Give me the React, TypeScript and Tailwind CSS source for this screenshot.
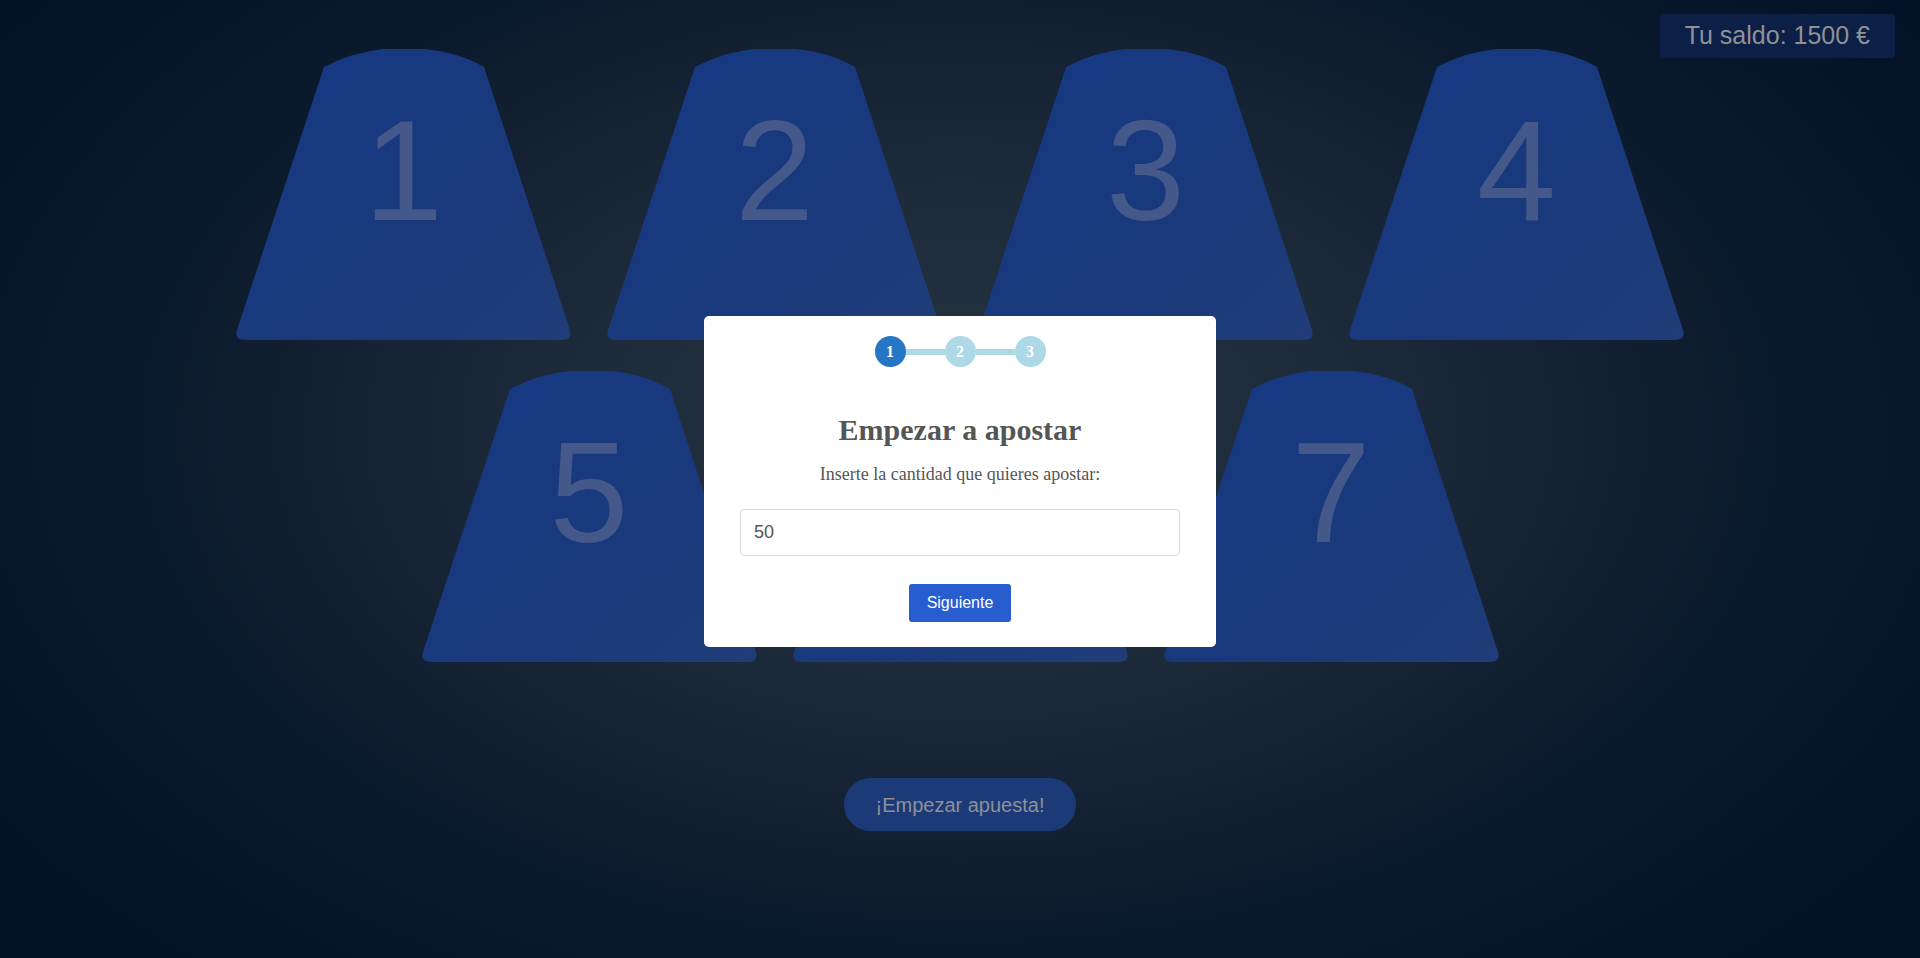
import React from "react";

function Cup({ n }: { n: number }) {
  return (
    <div className="relative w-[335px] h-[292px] flex justify-center">
      <svg
        className="absolute inset-0"
        width="335"
        height="292"
        viewBox="0 0 335 292"
        aria-hidden="true"
      >
        <defs>
          <linearGradient id={`cupg${n}`} x1="0" y1="0" x2="1" y2="1">
            <stop offset="0%" stopColor="#163984" />
            <stop offset="60%" stopColor="#1a397c" />
            <stop offset="100%" stopColor="#203d78" />
          </linearGradient>
        </defs>
        <path
          d="M1 281 L88 18 Q116 3 148 0 L188 0 Q222 3 248 18 L334 281 Q337 291 326 291 L9 291 Q-2 291 1 281 Z"
          fill={`url(#cupg${n})`}
        />
      </svg>
      <span className="relative pt-[51px] text-[142px] leading-[142px] text-[#44598a] font-['Liberation_Sans',Arial,sans-serif]">
        {n}
      </span>
    </div>
  );
}

export default function App() {
  return (
    <div className="relative min-h-[958px] w-full overflow-hidden bg-[radial-gradient(ellipse_60%_75%_at_50%_45%,#263443_0%,#1c2a3a_35%,#0c1a2d_70%,#031227_100%)] font-['Liberation_Sans',Arial,sans-serif]">
      <div className="absolute top-[14px] right-[25px] h-[44px] px-[25px] flex items-center rounded-[4px] bg-[#0c1f47] text-[25px] text-[#8f9196]">
        Tu saldo: 1500 €
      </div>

      <div className="flex flex-col items-center pt-[49px]">
        <div className="flex gap-[36px]">
          <Cup n={1} />
          <Cup n={2} />
          <Cup n={3} />
          <Cup n={4} />
        </div>
        <div className="flex gap-[36px] mt-[30px]">
          <Cup n={5} />
          <Cup n={6} />
          <Cup n={7} />
        </div>
        <button className="mt-[115px] w-[232px] h-[53px] rounded-full bg-[#1d3a78] text-[20px] text-[#8c909a]">
          ¡Empezar apuesta!
        </button>
      </div>

      <div className="fixed inset-0 flex justify-center items-start pt-[316px]">
        <div className="w-[512px] rounded-[5px] bg-white pt-[20px] pb-[25px] px-[36px] flex flex-col items-center">
          <div className="flex items-center">
            <div className="w-[31px] h-[31px] rounded-full bg-[#2775c5] flex items-center justify-center text-white font-bold text-[16px] font-['Liberation_Serif','Times_New_Roman',serif]">
              1
            </div>
            <div className="w-[39px] h-[6px] bg-[#add8e6]" />
            <div className="w-[31px] h-[31px] rounded-full bg-[#add8e6] flex items-center justify-center text-white font-bold text-[16px] font-['Liberation_Serif','Times_New_Roman',serif]">
              2
            </div>
            <div className="w-[39px] h-[6px] bg-[#add8e6]" />
            <div className="w-[31px] h-[31px] rounded-full bg-[#add8e6] flex items-center justify-center text-white font-bold text-[16px] font-['Liberation_Serif','Times_New_Roman',serif]">
              3
            </div>
          </div>
          <h2 className="mt-[45px] text-[30px] leading-[36px] font-bold text-[#555555] font-['Liberation_Serif','Times_New_Roman',serif]">
            Empezar a apostar
          </h2>
          <p className="mt-[14px] text-[18px] leading-[24px] text-[#555555] font-['Liberation_Serif','Times_New_Roman',serif]">
            Inserte la cantidad que quieres apostar:
          </p>
          <input
            type="text"
            defaultValue="50"
            className="mt-[23px] w-[440px] h-[47px] rounded-[4px] border border-[#d9d9d9] px-[13px] text-[18px] text-[#555555] outline-none font-['Liberation_Sans',Arial,sans-serif]"
          />
          <button className="mt-[28px] h-[38px] px-[18px] rounded-[3px] bg-[#285dd0] text-white text-[16px] font-['Liberation_Sans',Arial,sans-serif]">
            Siguiente
          </button>
        </div>
      </div>
    </div>
  );
}
